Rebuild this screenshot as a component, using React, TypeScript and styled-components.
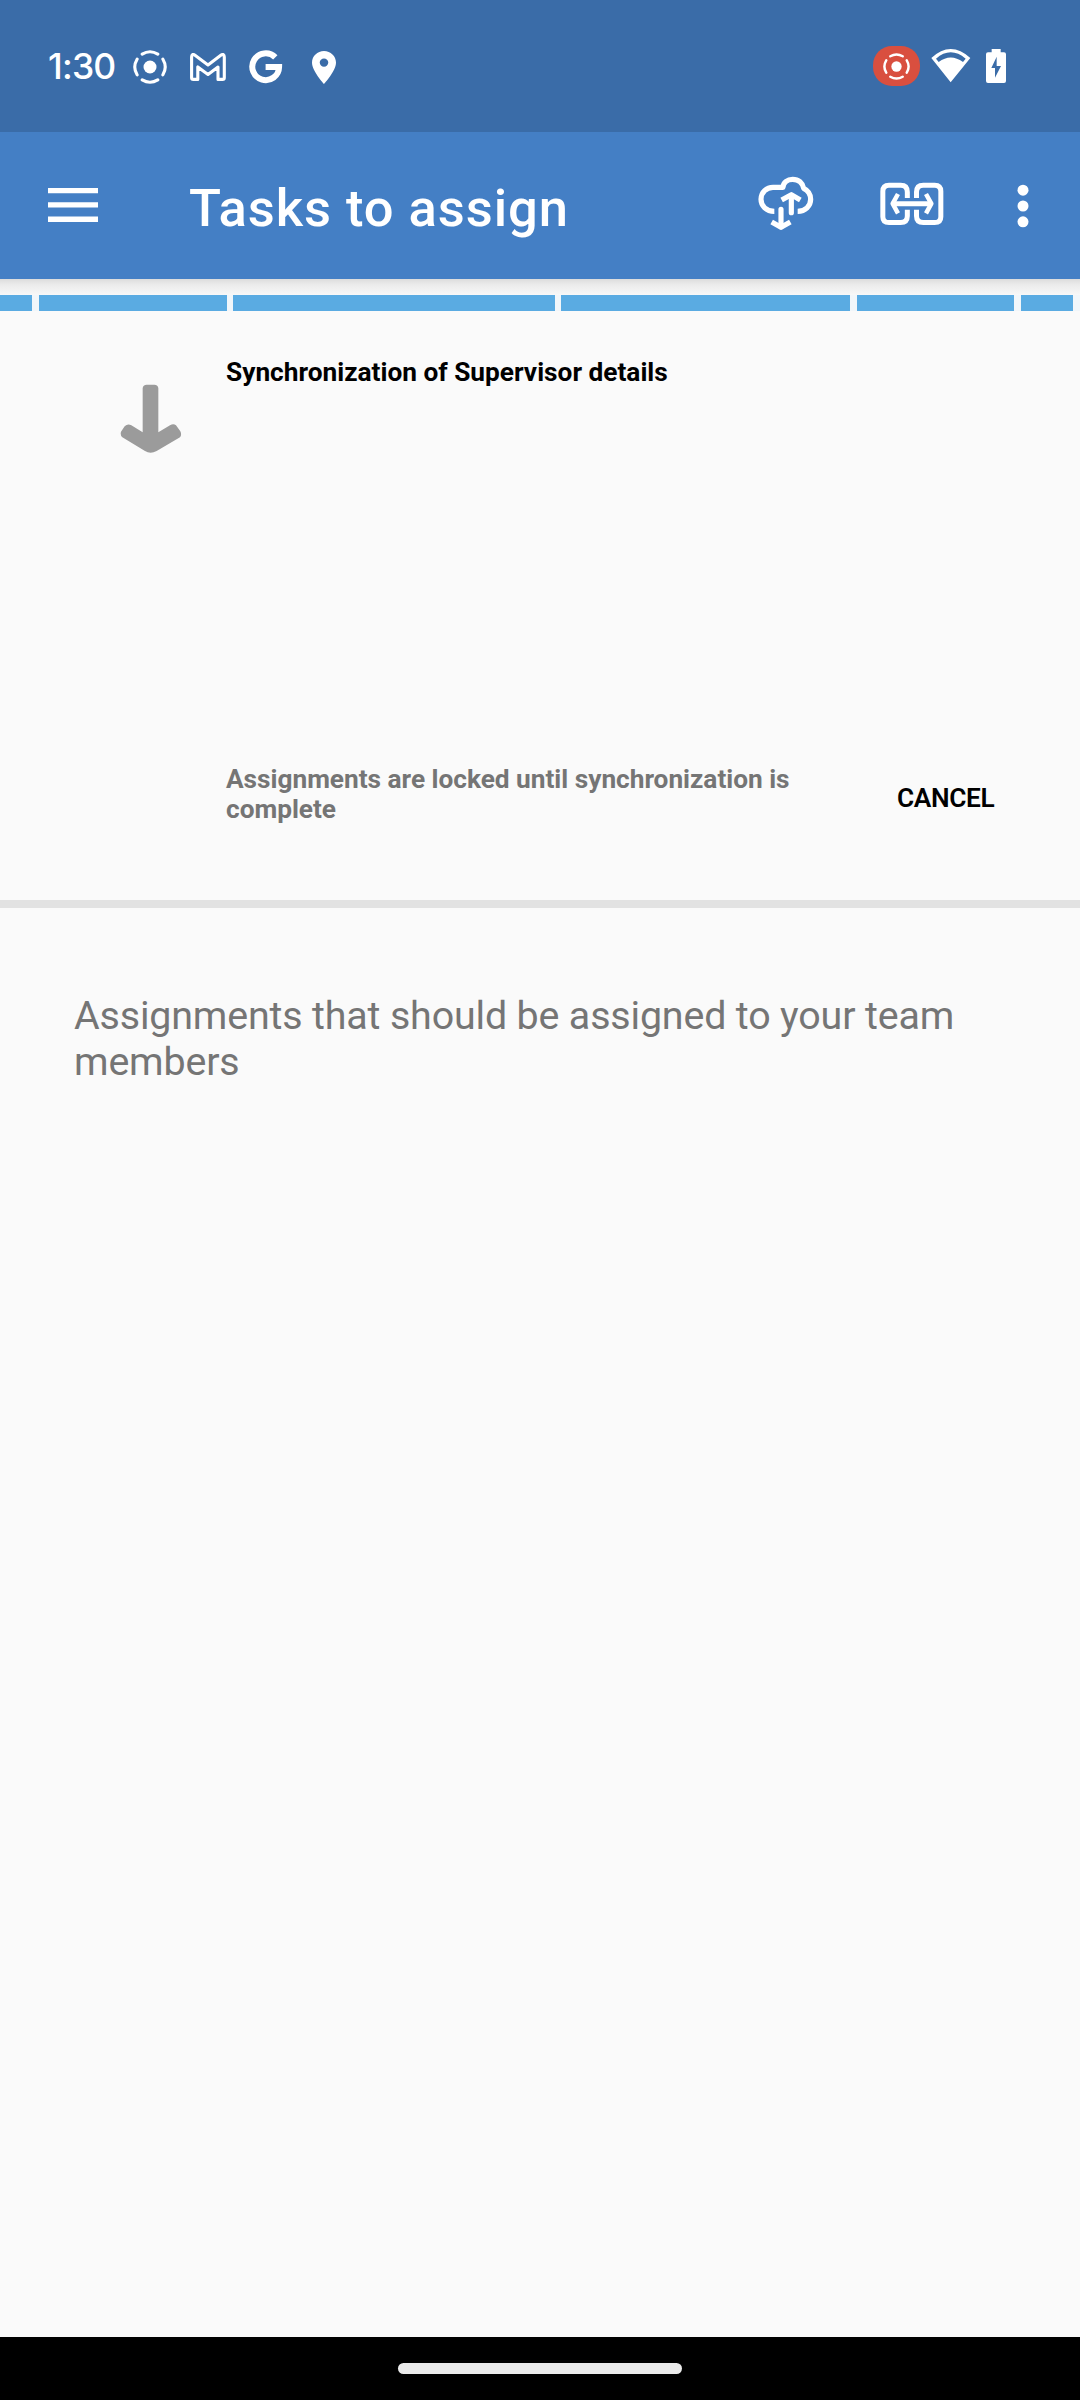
import React from "react";
import styled, { createGlobalStyle } from "styled-components";

const GlobalStyle = createGlobalStyle`
  html, body { margin: 0; padding: 0; background: #fafafa; }
  * { box-sizing: border-box; }
  svg { display: block; flex: none; }
`;

const Screen = styled.div`
  width: 1080px;
  height: 2400px;
  display: flex;
  flex-direction: column;
  overflow: hidden;
  background: #fafafa;
  font-family: Roboto, "Liberation Sans", sans-serif;
`;

const StatusBar = styled.header`
  height: 132px;
  flex: none;
  display: flex;
  justify-content: space-between;
  align-items: center;
  padding: 0 74px 0 48px;
  background: #3a6ca8;
`;

const StatusGroup = styled.div<{ $gap: number; $top?: number }>`
  display: flex;
  align-items: center;
  gap: ${(p) => p.$gap}px;
  padding-top: ${(p) => p.$top ?? 0}px;
`;

const Clock = styled.span`
  width: 65px;
  font-family: Inter, "Open Sans", sans-serif;
  font-size: 35.5px;
  font-weight: 500;
  line-height: 40px;
  letter-spacing: -0.8px;
  color: #fff;
  white-space: nowrap;
`;

const RecordChip = styled.div`
  width: 47.5px;
  height: 40px;
  border-radius: 19px;
  background: #d94f3f;
  display: flex;
  align-items: center;
  justify-content: center;
`;

const IconSlot = styled.div<{ $left: number }>`
  padding-left: ${(p) => p.$left}px;
`;

const Toolbar = styled.div`
  height: 147px;
  flex: none;
  display: flex;
  align-items: center;
  padding: 0 51.5px 0 48px;
  background: #447fc5;
`;

const ToolButton = styled.button<{ $right?: number; $lift?: number }>`
  padding: 0;
  margin: 0 ${(p) => p.$right ?? 0}px ${(p) => p.$lift ?? 0}px 0;
  border: 0;
  background: none;
  display: flex;
`;

const Title = styled.h1`
  flex: 1;
  margin: 0;
  padding-top: 4px;
  font-size: 52.5px;
  line-height: 62px;
  font-weight: 500;
  letter-spacing: 0.95px;
  color: #fff;
  white-space: nowrap;
`;

const ToolbarShade = styled.div`
  height: 16px;
  flex: none;
  background: linear-gradient(#dcdcdc, #ebebeb 35%, #f8f8f8);
`;

const Progress = styled.div`
  height: 16px;
  flex: none;
  display: flex;
  background: #f1f6fa;
`;

const Segment = styled.div<{ $w: number; $gap: number }>`
  width: ${(p) => p.$w}px;
  margin-right: ${(p) => p.$gap}px;
  background: #5aabe2;
`;

const SyncPanel = styled.section`
  height: 597px;
  flex: none;
  display: grid;
  grid-template-columns: 226px 600px 1fr;
  grid-template-rows: 410px 1fr;
  border-bottom: 8px solid #e2e2e2;
`;

const ArrowCell = styled.div`
  padding: 73px 0 0 120px;
`;

const SyncTitle = styled.div`
  grid-column: 2 / 4;
  padding-top: 46px;
  font-size: 26.25px;
  line-height: 31px;
  font-weight: 700;
  color: #000;
`;

const LockNote = styled.div`
  grid-column: 2;
  padding-top: 43px;
  font-size: 26.25px;
  line-height: 30px;
  font-weight: 700;
  letter-spacing: -0.02px;
  color: #757575;
`;

const CancelButton = styled.button`
  align-self: start;
  margin: 62px 0 0 71px;
  padding: 0;
  border: 0;
  background: none;
  font: 600 26.25px/31px Roboto, sans-serif;
  letter-spacing: -0.35px;
  color: #000;
  text-align: left;
`;

const Content = styled.main`
  flex: 1;
  padding: 85px 100px 0 74px;
`;

const Message = styled.p`
  margin: 0;
  font-size: 39.4px;
  line-height: 46px;
  letter-spacing: -0.16px;
  color: #757575;
  white-space: nowrap;
`;

const NavBar = styled.footer`
  height: 63px;
  flex: none;
  display: flex;
  justify-content: center;
  align-items: center;
  background: #000;
`;

const HomeHandle = styled.div`
  width: 284px;
  height: 11px;
  border-radius: 6px;
  background: #ebebeb;
`;

const RecordIcon = ({ size }: { size: number }) => (
  <svg width={size} height={size} viewBox="-17 -17 34 34" fill="none" stroke="#fff" strokeWidth="3.1" strokeLinecap="round">
    <circle r="6.5" fill="#fff" stroke="none" />
    {[0, 90, 180, 270].map((a) => (
      <path key={a} d="M-7.8 -12.9A15.1 15.1 0 0 1 7.8 -12.9" transform={`rotate(${a})`} />
    ))}
  </svg>
);

const MailIcon = () => (
  <svg width="36" height="28" viewBox="190 52.3 36 28" fill="none" stroke="#fff" strokeWidth="3.1" strokeLinejoin="round">
    <path d="M191.6 77V56.3Q191.6 52.3 195 54.6L208 64.3L220.8 54.6Q224.3 52.3 224.3 56.3V77Q224.3 78.7 222.5 78.7H218V66.3L208 73.7L197.8 66.3V78.7H193.4Q191.6 78.7 191.6 77Z" />
  </svg>
);

const GoogleIcon = () => (
  <svg width="34" height="34" viewBox="249 50 34 34" fill="none" stroke="#fff" strokeWidth="6">
    <path d="M275.3 57.4A13.4 13.4 0 1 0 279.1 67H265.6" />
  </svg>
);

const PinIcon = () => (
  <svg width="24" height="33" viewBox="5 2 14 20" preserveAspectRatio="none" fill="#fff">
    <path d="M12 2C8.13 2 5 5.13 5 9c0 5.25 7 13 7 13s7-7.75 7-13c0-3.87-3.13-7-7-7zm0 9.5a2.5 2.5 0 0 1 0-5 2.5 2.5 0 0 1 0 5z" />
  </svg>
);

const WifiIcon = () => (
  <svg width="40" height="34" viewBox="242 57 120 102">
    <path fill="#fff" fillRule="evenodd" d="M243 84Q301 30 360 84L301 157ZM257 86L265 96Q301 69 338 96L346 86Q301 48 257 86Z" />
  </svg>
);

const BatteryIcon = () => (
  <svg width="20" height="34" viewBox="408 57 60 102">
    <path fill="#fff" fillRule="evenodd" d="M425 57H452V67H462Q468 67 468 73V153Q468 159 462 159H414Q408 159 408 153V73Q408 67 414 67H425ZM440 80L424 114H435V143L453 108H440Z" />
  </svg>
);

const MenuIcon = () => (
  <svg width="50" height="35" viewBox="0 0 50 35" fill="#fff">
    <path d="M0 0H50V5.3H0ZM0 14.3H50V19.6H0ZM0 28.6H50V33.9H0Z" />
  </svg>
);

const CloudSyncIcon = () => (
  <svg width="56" height="55" viewBox="113 78 168 165" fill="none" stroke="#fff" strokeWidth="15.5" strokeLinejoin="round">
    <path d="M162 184C138 184 122 168 122 148C122 126 139 112 158 112H188C189 98 201 88 217 88C235 88 247 99 250 115C264 122 271 134 271 148C271 168 255 184 232 184" />
    <path d="M182 178V230M213 188V138" strokeLinecap="round" />
    <path d="M154 216L182 232L210 216M184 150L213 134L240 150" />
  </svg>
);

const LinkIcon = () => (
  <svg width="64" height="44" viewBox="479 95 192 132" fill="none" stroke="#fff" strokeWidth="15">
    <path d="M561 143V125Q561 104.5 541 104.5H506Q487.5 104.5 487.5 123V199Q487.5 216.5 506 216.5H541Q561 216.5 561 197V178" />
    <path d="M588.5 143V125Q588.5 104.5 609 104.5H643Q661.5 104.5 661.5 123V199Q661.5 216.5 643 216.5H609Q588.5 216.5 588.5 197V178" />
    <path d="M518 160H632" />
    <path d="M533 131L517 160L533 189M617 131L633 160L617 189" strokeLinejoin="round" strokeWidth="13.5" />
  </svg>
);

const MoreIcon = () => (
  <svg width="12" height="44" viewBox="0 0 12 44" fill="#fff">
    {[6.2, 22, 37.8].map((y) => (
      <circle key={y} cx="6" cy={y} r="5.5" />
    ))}
  </svg>
);

const DownArrow = () => (
  <svg width="62" height="70" viewBox="90 130 186 210">
    <path fill="#9b9b9b" d="M158 143Q159 132 170 132H193Q204 132 205 143V275L240 254Q250 247 258 254L271 272Q276 283 270 290L200 331Q181 342 165 331L97 290Q90 284 93 273L104 257Q113 248 124 254L158 275Z" />
  </svg>
);

const SEGMENTS = [
  { w: 32, gap: 7 },
  { w: 188, gap: 6 },
  { w: 322, gap: 6 },
  { w: 289, gap: 7 },
  { w: 157, gap: 7 },
  { w: 52, gap: 0 },
];

export default function App() {
  return (
    <Screen>
      <GlobalStyle />
      <StatusBar>
        <StatusGroup $gap={20} $top={2}>
          <Clock>1:30</Clock>
          <StatusGroup $gap={23}>
            <RecordIcon size={34} />
            <MailIcon />
            <GoogleIcon />
            <IconSlot $left={6}>
              <PinIcon />
            </IconSlot>
          </StatusGroup>
        </StatusGroup>
        <StatusGroup $gap={11}>
          <RecordChip>
            <RecordIcon size={27} />
          </RecordChip>
          <WifiIcon />
          <IconSlot $left={4}>
            <BatteryIcon />
          </IconSlot>
        </StatusGroup>
      </StatusBar>
      <Toolbar>
        <ToolButton $right={91} aria-label="Menu">
          <MenuIcon />
        </ToolButton>
        <Title>Tasks to assign</Title>
        <ToolButton $right={66} $lift={4} aria-label="Sync">
          <CloudSyncIcon />
        </ToolButton>
        <ToolButton $right={72.5} $lift={4} aria-label="Connect">
          <LinkIcon />
        </ToolButton>
        <ToolButton aria-label="More">
          <MoreIcon />
        </ToolButton>
      </Toolbar>
      <ToolbarShade />
      <Progress>
        {SEGMENTS.map((s, i) => (
          <Segment key={i} $w={s.w} $gap={s.gap} />
        ))}
      </Progress>
      <SyncPanel>
        <ArrowCell>
          <DownArrow />
        </ArrowCell>
        <SyncTitle>Synchronization of Supervisor details</SyncTitle>
        <LockNote>
          Assignments are locked until synchronization is
          <br />
          complete
        </LockNote>
        <CancelButton>CANCEL</CancelButton>
      </SyncPanel>
      <Content>
        <Message>
          Assignments that should be assigned to your team
          <br />
          members
        </Message>
      </Content>
      <NavBar>
        <HomeHandle />
      </NavBar>
    </Screen>
  );
}
